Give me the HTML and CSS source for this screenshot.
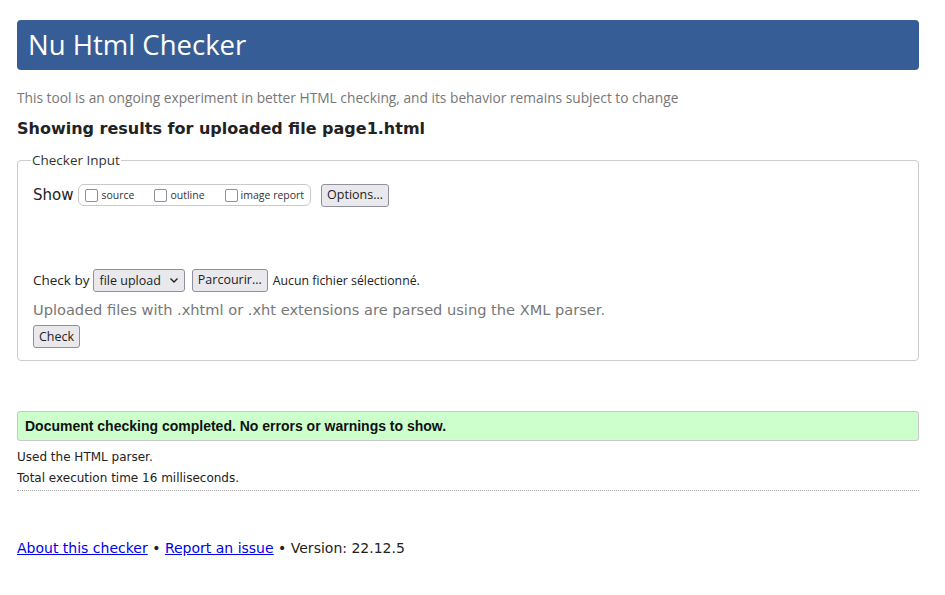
FILE: index.html
```html
<!DOCTYPE html>
<html lang="en">
<head>
<meta charset="utf-8">
<title>Nu Html Checker</title>
<link rel="stylesheet" href="styles.css">
</head>
<body>
<div class="page">
  <h1 class="banner">Nu Html Checker</h1>
  <p class="tagline">This tool is an ongoing experiment in better HTML checking, and its behavior remains subject to change</p>
  <h2 class="results">Showing results for uploaded file page1.html</h2>
  <fieldset class="input">
    <legend>Checker Input</legend>
    <div class="show-row">
      <span class="show-label">Show</span>
      <span class="opts">
        <label class="opt"><span class="cb"></span>source</label>
        <label class="opt"><span class="cb"></span>outline</label>
        <label class="opt"><span class="cb"></span>image report</label>
      </span>
      <button class="btn options">Options…</button>
    </div>
    <div class="check-row">
      <span class="ui">Check by</span>
      <span class="select">file upload <svg width="10" height="7" viewBox="0 0 10 7"><path d="M1.5 1.5 L5 5 L8.5 1.5" fill="none" stroke="#222" stroke-width="1.4"/></svg></span>
      <button class="btn browse">Parcourir…</button>
      <span class="ui small">Aucun fichier sélectionné.</span>
    </div>
    <p class="note">Uploaded files with .xhtml or .xht extensions are parsed using the XML parser.</p>
    <button class="btn check">Check</button>
  </fieldset>
  <p class="success">Document checking completed. No errors or warnings to show.</p>
  <p class="meta">Used the HTML parser.</p>
  <p class="meta">Total execution time 16 milliseconds.</p>
  <hr class="sep">
  <p class="footer"><a href="#">About this checker</a> • <a href="#">Report an issue</a> • Version: 22.12.5</p>
</div>
</body>
</html>
```
FILE: styles.css
```css
html, body { margin: 0; padding: 0; background: #fff; }
body { font-family: "DejaVu Sans", sans-serif; color: #222; }
.page { width: 902px; margin-left: 17px; padding-top: 20px; }
.banner {
  margin: 0; height: 50px; box-sizing: border-box;
  background: #365d95; color: #fff; border-radius: 4px;
  font-family: "Open Sans", sans-serif; font-weight: 400; font-size: 27.5px;
  line-height: 50px; padding-left: 11px;
}
.tagline {
  margin: 18px 0 0; font-family: "Open Sans", sans-serif; font-size: 13.75px;
  color: #777; line-height: 20px;
}
.results { margin: 10px 0 0; font-size: 16px; font-weight: bold; line-height: 22px; color: #222; }
.input {
  margin: 11px 0 0; padding: 10px 15px 12px; border: 1px solid #ccc; border-radius: 4px;
}
.input legend {
  padding: 0 1px; margin-left: -2px; font-family: "Open Sans", sans-serif; font-size: 13.5px; color: #333;
}
.show-row { display: flex; align-items: center; height: 24px; margin-top: 4px; }
.show-label { font-size: 15px; margin-right: 5px; }
.opts {
  display: inline-flex; align-items: center; gap: 0; height: 20px; padding: 0 6px;
  border: 1px solid #c9c9c9; border-radius: 6px;
  font-family: "Open Sans", sans-serif; font-size: 10.5px; color: #333;
}
.opt { display: inline-flex; align-items: center; margin-right: 20px; }
.opt:last-child { margin-right: 0; }
.cb {
  width: 11px; height: 11px; border: 1px solid #8f8f9d; border-radius: 2px; margin-right: 3px; display: inline-block;
}
.btn {
  font-family: "Open Sans", sans-serif; font-size: 12.5px; color: #222;
  background: #e9e9ed; border: 1px solid #8f8f9d; border-radius: 3px;
  height: 23px; padding: 0 5px; line-height: 20px;
}
.options { margin-left: 10px; }
.check-row { display: flex; align-items: center; margin-top: 61px; height: 24px; }
.ui { font-family: "Open Sans", sans-serif; font-size: 13.5px; color: #222; }
.ui.small { font-size: 12.3px; margin-left: 5px; }
.select {
  display: inline-flex; align-items: center; gap: 8px; height: 23px; box-sizing: border-box;
  margin-left: 4px; padding: 0 5px; border: 1px solid #8f8f9d; border-radius: 3px; background: #e9e9ed;
  font-family: "Open Sans", sans-serif; font-size: 12.5px;
}
.browse { margin-left: 7px; }
.note { margin: 8px 0 0; font-size: 14.6px; color: #777; line-height: 20px; }
.check { margin-top: 5px; }
.success {
  margin: 50px 0 0; height: 30px; box-sizing: border-box; padding: 0 7px;
  background: #ccffcc; border: 1px solid #c8c8c8; border-radius: 3px;
  font-family: "Liberation Sans", sans-serif; font-weight: bold; font-size: 14px; line-height: 28px; color: #111;
}
.meta { margin: 9px 0 0; font-size: 12px; line-height: 15px; color: #222; }
.meta + .meta { margin-top: 6px; }
.sep { margin: 4px 0 0; border: 0; border-top: 1px dotted #aaa; height: 0; }
.footer { margin: 48px 0 0; font-size: 14px; color: #222; line-height: 18px; }
.footer a { color: #00e; }
```
